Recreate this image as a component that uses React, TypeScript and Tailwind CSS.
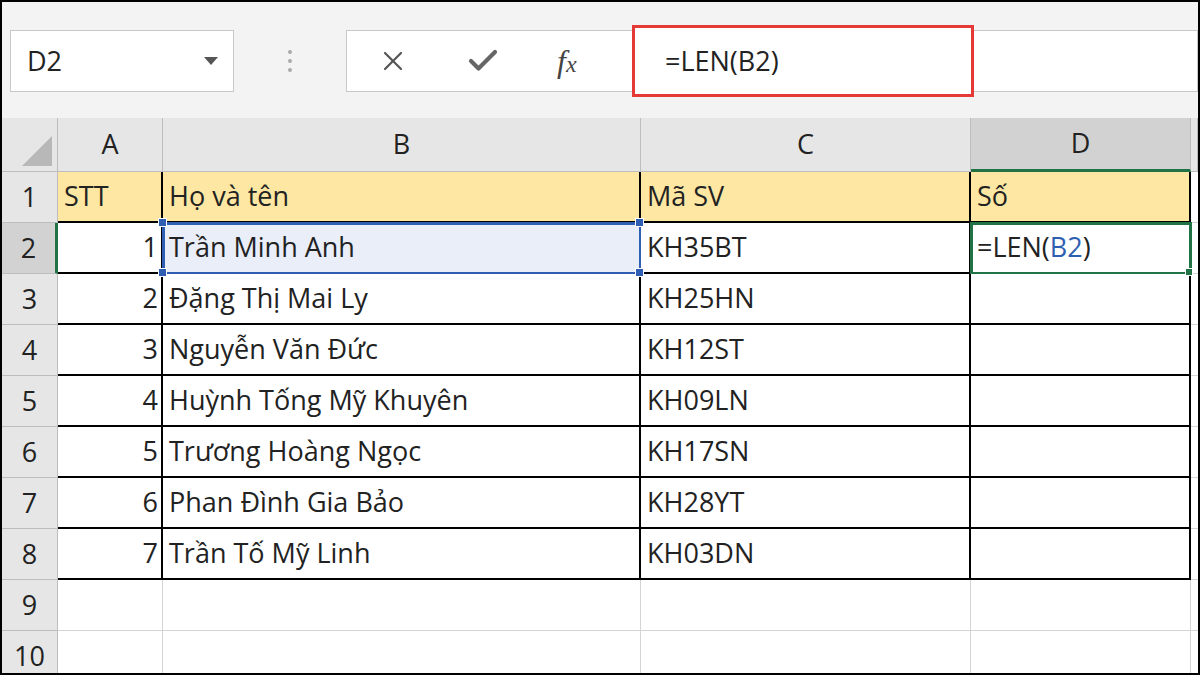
import { X, Check } from 'lucide-react'

const rows = [
  ['STT', 'Họ và tên', 'Mã SV', 'Số'],
  ['1', 'Trần Minh Anh', 'KH35BT', ''],
  ['2', 'Đặng Thị Mai Ly', 'KH25HN', ''],
  ['3', 'Nguyễn Văn Đức', 'KH12ST', ''],
  ['4', 'Huỳnh Tống Mỹ Khuyên', 'KH09LN', ''],
  ['5', 'Trương Hoàng Ngọc', 'KH17SN', ''],
  ['6', 'Phan Đình Gia Bảo', 'KH28YT', ''],
  ['7', 'Trần Tố Mỹ Linh', 'KH03DN', ''],
  ['', '', '', ''],
  ['', '', '', ''],
]

function Handle({ className }: { className: string }) {
  return <span className={`absolute w-[9px] h-[9px] bg-[#2f5fb3] border border-white z-10 ${className}`} />
}

export default function App() {
  return (
    <div className="w-[1200px] h-[675px] overflow-hidden border-2 border-black bg-[#f3f3f3] text-[#222]" style={{ fontFamily: '"Open Sans", "Noto Sans", sans-serif' }}>
      <div className="h-[116px] flex items-start pt-[28px] pl-[8px] gap-0">
        <div className="w-[224px] h-[62px] bg-white border border-[#c8c8c8] flex items-center justify-between pl-[16px] pr-[14px]">
          <span className="text-[27px]">D2</span>
          <svg width="16" height="10" viewBox="0 0 16 10"><path d="M1 1h14L8 9z" fill="#555" /></svg>
        </div>
        <div className="w-[112px] h-[62px] flex flex-col items-center justify-center gap-[5px] text-[#999]">
          <span className="w-[4px] h-[4px] rounded-full bg-[#aaa]" />
          <span className="w-[4px] h-[4px] rounded-full bg-[#aaa]" />
          <span className="w-[4px] h-[4px] rounded-full bg-[#aaa]" />
        </div>
        <div className="flex-1 h-[62px] bg-white border border-[#c8c8c8] flex items-center relative">
          <div className="w-[275px] flex items-center pl-[30px] gap-[56px] text-[#555]">
            <X size={32} strokeWidth={1.6} />
            <Check size={36} strokeWidth={2.8} className="text-[#666]" />
            <span className="italic text-[32px] text-[#444] leading-none" style={{ fontFamily: '"Liberation Serif", serif' }}>f<span className="text-[24px]">x</span></span>
          </div>
          <div className="ml-[10px] -my-[6px] w-[342px] h-[72px] border-[3px] border-[#e53935] bg-white flex items-center pl-[30px] text-[27px]">=LEN(B2)</div>
        </div>
      </div>
      <div className="grid grid-cols-[56px_105px_478px_330px_220px_1fr] grid-rows-[54px_repeat(10,51px)] bg-white">
        <div className="bg-[#e6e6e6] border-r border-b border-[#bdbdbd] relative">
          <svg className="absolute right-[5px] bottom-[5px]" width="30" height="30" viewBox="0 0 30 30"><path d="M30 0V30H0z" fill="#b8b8b8" /></svg>
        </div>
        {['A', 'B', 'C', 'D', ''].map((c, i) => (
          <div key={i} className={`flex items-center justify-center text-[27px] border-r border-[#bdbdbd] ${c === 'D' ? 'bg-[#d2d2d2] border-b-[3px] border-b-[#217346]' : 'bg-[#e6e6e6] border-b'}`}>{c}</div>
        ))}
        {rows.map((r, ri) => {
          const inTable = ri < 8
          return [
            <div key={`h${ri}`} className={`flex items-center justify-center text-[27px] border-b border-[#bdbdbd] ${ri === 1 ? 'bg-[#d2d2d2] border-r-[3px] border-r-[#217346]' : 'bg-[#e6e6e6] border-r'}`}>{ri + 1}</div>,
            ...r.map((v, ci) => {
              const yellow = ri === 0
              const isB2 = ri === 1 && ci === 1
              const isD2 = ri === 1 && ci === 3
              const border = inTable ? 'border-r-2 border-b-2 border-black' : 'border-r border-b border-[#d4d4d4]'
              const bg = yellow ? 'bg-[#fde7a2]' : isB2 ? 'bg-[#e9eef8]' : 'bg-white'
              const align = ci === 0 && ri > 0 ? 'justify-end pr-[3px]' : 'pl-[6px]'
              return (
                <div key={`${ri}-${ci}`} className={`relative flex items-center text-[27px] ${border} ${bg} ${align} ${isB2 ? 'outline-[3px] outline-[#2f5fb3] -outline-offset-2' : ''} ${isD2 ? 'outline-[3px] outline-[#217346] -outline-offset-2' : ''}`}>
                  {isD2 ? <span>=LEN(<span className="text-[#2f5fb3]">B2</span>)</span> : v}
                  {isB2 && (
                    <>
                      <Handle className="-left-[5px] -top-[5px]" />
                      <Handle className="-right-[5px] -top-[5px]" />
                      <Handle className="-left-[5px] -bottom-[5px]" />
                      <Handle className="-right-[5px] -bottom-[5px]" />
                    </>
                  )}
                  {isD2 && <span className="absolute -right-[4px] -bottom-[4px] w-[8px] h-[8px] bg-[#217346] border border-white z-10" />}
                </div>
              )
            }),
            <div key={`e${ri}`} className="border-b border-[#d4d4d4] bg-white" />,
          ]
        })}
      </div>
    </div>
  )
}
